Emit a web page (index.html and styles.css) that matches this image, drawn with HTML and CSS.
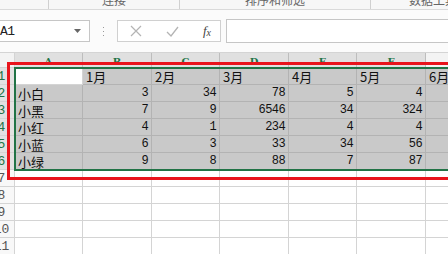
FILE: index.html
```html
<!DOCTYPE html>
<html lang="zh">
<head>
    <meta charset="UTF-8">
    <title>Sheet1</title>
    <link rel="stylesheet" href="styles.css">
</head>
<body>
    <!-- ribbon group captions, cut at the top -->
    <div class="ribbon">
        <div class="group g1"></div>
        <div class="group g2"><span>连接</span></div>
        <div class="group g3"><span>排序和筛选</span></div>
        <div class="group g4"><span>数据工具</span></div>
    </div>

    <!-- name box + formula bar -->
    <div class="formula-bar">
        <div class="name-box">
            <span>A1</span>
            <svg class="caret" width="7" height="4" viewBox="0 0 7 4"><path d="M0 0h7L3.5 4z" fill="#666"/></svg>
        </div>
        <div class="dots"><i></i><i></i><i></i></div>
        <div class="fx-buttons">
            <svg width="12" height="12" viewBox="0 0 12 12"><path d="M1 1l10 10M11 1L1 11" stroke="#b4b4b4" stroke-width="1.2"/></svg>
            <svg width="13" height="11" viewBox="0 0 13 11"><path d="M1 6l4 4 7-9" stroke="#b4b4b4" stroke-width="1.3" fill="none"/></svg>
            <span class="fx">f<sub>x</sub></span>
        </div>
        <div class="formula-input"></div>
    </div>

    <div class="sheet">
        <div class="row head">
            <div class="corner"></div>
            <div class="col sel">A</div><div class="col sel">B</div><div class="col sel">C</div>
            <div class="col sel">D</div><div class="col sel">E</div><div class="col sel">F</div>
            <div class="col"></div>
        </div>
        <div class="row">
            <div class="rh sel">1</div>
            <div class="cell active"></div><div class="cell on">1月</div><div class="cell on">2月</div>
            <div class="cell on">3月</div><div class="cell on">4月</div><div class="cell on">5月</div><div class="cell on">6月</div>
        </div>
        <div class="row">
            <div class="rh sel">2</div>
            <div class="cell on">小白</div><div class="cell on n">3</div><div class="cell on n">34</div>
            <div class="cell on n">78</div><div class="cell on n">5</div><div class="cell on n">4</div><div class="cell on"></div>
        </div>
        <div class="row">
            <div class="rh sel">3</div>
            <div class="cell on">小黑</div><div class="cell on n">7</div><div class="cell on n">9</div>
            <div class="cell on n">6546</div><div class="cell on n">34</div><div class="cell on n">324</div><div class="cell on"></div>
        </div>
        <div class="row">
            <div class="rh sel">4</div>
            <div class="cell on">小红</div><div class="cell on n">4</div><div class="cell on n">1</div>
            <div class="cell on n">234</div><div class="cell on n">4</div><div class="cell on n">4</div><div class="cell on"></div>
        </div>
        <div class="row">
            <div class="rh sel">5</div>
            <div class="cell on">小蓝</div><div class="cell on n">6</div><div class="cell on n">3</div>
            <div class="cell on n">33</div><div class="cell on n">34</div><div class="cell on n">56</div><div class="cell on"></div>
        </div>
        <div class="row">
            <div class="rh sel">6</div>
            <div class="cell on">小绿</div><div class="cell on n">9</div><div class="cell on n">8</div>
            <div class="cell on n">88</div><div class="cell on n">7</div><div class="cell on n">87</div><div class="cell on"></div>
        </div>
        <div class="row">
            <div class="rh">7</div>
            <div class="cell"></div><div class="cell"></div><div class="cell"></div><div class="cell"></div><div class="cell"></div><div class="cell"></div><div class="cell"></div>
        </div>
        <div class="row">
            <div class="rh">8</div>
            <div class="cell"></div><div class="cell"></div><div class="cell"></div><div class="cell"></div><div class="cell"></div><div class="cell"></div><div class="cell"></div>
        </div>
        <div class="row">
            <div class="rh">9</div>
            <div class="cell"></div><div class="cell"></div><div class="cell"></div><div class="cell"></div><div class="cell"></div><div class="cell"></div><div class="cell"></div>
        </div>
        <div class="row">
            <div class="rh">10</div>
            <div class="cell"></div><div class="cell"></div><div class="cell"></div><div class="cell"></div><div class="cell"></div><div class="cell"></div><div class="cell"></div>
        </div>
        <div class="row">
            <div class="rh">11</div>
            <div class="cell"></div><div class="cell"></div><div class="cell"></div><div class="cell"></div><div class="cell"></div><div class="cell"></div><div class="cell"></div>
        </div>

        <!-- selection border and the red marker drawn on top -->
        <div class="selection"></div>
        <div class="marker"></div>
    </div>
</body>
</html>
```

FILE: styles.css
```css
body {
    margin: 0;
    width: 448px;
    height: 254px;
    overflow: hidden;
    background: #fff;
    font-family: "Noto Sans CJK SC", sans-serif;
}

/* Ribbon */
.ribbon {
    display: flex;
    height: 9px;
    overflow: hidden;
    background: #f7f7f7;
    border-bottom: 1px solid #dadada;
}

.group {
    flex-shrink: 0;
    text-align: center;
    border-right: 1px solid #d0d0d0;
    box-sizing: border-box;
}

.group span {
    display: block;
    margin-top: -8px;
    font-size: 12px;
    line-height: 16px;
    color: #666;
}

.g1 { width: 49px; }
.g2 { width: 131px; }
.g3 { width: 191px; }
.g4 { width: 120px; border-right: none; text-align: left; padding-left: 38px; }

/* Formula bar */
.formula-bar {
    display: flex;
    align-items: center;
    height: 42px;
    background: #fbfbfb;
}

.name-box {
    display: flex;
    flex-shrink: 0;
    align-items: center;
    justify-content: space-between;
    width: 91px;
    height: 22px;
    margin-left: -1px;
    padding: 0 8px 0 1px;
    box-sizing: border-box;
    background: #fff;
    border: 1px solid #c6c6c6;
    font: 13px "Liberation Mono", monospace;
    color: #222;
}

.name-box span {
    margin-left: -1px;
    letter-spacing: -0.5px;
}

.dots {
    display: flex;
    flex-direction: column;
    gap: 3px;
    margin: 0 13px;
}

.dots i {
    display: block;
    width: 1px;
    height: 1px;
    background: #999;
}

.fx-buttons {
    display: flex;
    flex-shrink: 0;
    align-items: center;
    justify-content: space-between;
    width: 104px;
    height: 22px;
    padding: 0 9px 0 12px;
    box-sizing: border-box;
    background: #fff;
    border: 1px solid #d0d0d0;
}

.fx {
    font: italic 13px "Liberation Serif", serif;
    color: #444;
}

.fx sub {
    font-size: 10px;
    vertical-align: -1px;
}

.formula-input {
    flex: 1;
    height: 22px;
    margin-left: 5px;
    margin-right: -2px;
    background: #fff;
    border: 1px solid #c6c6c6;
}

/* Sheet grid */
.sheet {
    position: relative;
    border-top: 1px solid #d4d4d4;
}

.row {
    display: grid;
    grid-template-columns: 15px 68px 69px 68px 69px 68px 69px 40px;
    height: 17px;
}

.row.head {
    height: 15px;
}

.row > div {
    box-sizing: border-box;
    border-right: 1px solid #d4d4d4;
    border-bottom: 1px solid #d4d4d4;
    overflow: hidden;
    white-space: nowrap;
}

.corner {
    background: #f3f3f3;
}

.col {
    background: #f3f3f3;
    text-align: center;
    font: bold 10px "DejaVu Serif", serif;
    line-height: 17px;
    color: #666;
}

.col.sel {
    background: #e0e0e0;
    color: #217346;
    border-right-color: #bdbdbd !important;
}

.rh {
    background: #f8f8f8;
    text-align: center;
    text-indent: -11px;
    font: 13px "Liberation Mono", monospace;
    line-height: 17px;
    color: #555;
}

.rh.sel {
    background: #e2e2e2;
    color: #217346;
}

.cell {
    padding: 0 3px;
    font-size: 13px;
    line-height: 17px;
    color: #111;
}

.cell.on {
    background: #c9c9c9;
    border-color: #b3b3b3 !important;
}

.cell.active {
    background: #fff;
}

.cell.n {
    text-align: right;
    font: 12px "Liberation Mono", monospace;
    letter-spacing: -0.6px;
    line-height: 17px;
}

/* Overlays */
.selection {
    position: absolute;
    left: 14px;
    top: 14px;
    width: 460px;
    height: 104px;
    box-sizing: border-box;
    border: 2px solid #217346;
}

.marker {
    position: absolute;
    left: 7px;
    top: 9px;
    width: 460px;
    height: 118px;
    box-sizing: border-box;
    border: 3px solid #e8141c;
}
```
